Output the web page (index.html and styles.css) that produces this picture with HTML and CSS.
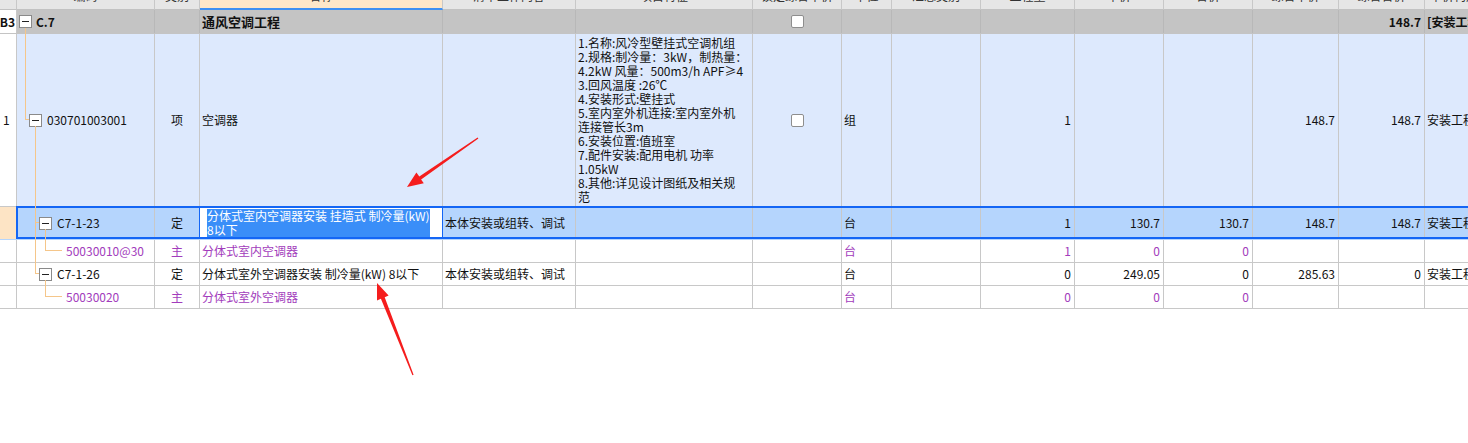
FILE: index.html
```html
<!DOCTYPE html>
<html lang="zh-CN">
<head>
<meta charset="utf-8">
<title>分部分项</title>
<link rel="stylesheet" href="styles.css">
</head>
<body>
<div class="page">
  <div class="grid">
    <div class="row head">
      <div class="c"></div>
      <div class="c">编码</div>
      <div class="c">类别</div>
      <div class="c name-h">名称</div>
      <div class="c">清单工作内容</div>
      <div class="c">项目特征</div>
      <div class="c">锁定综合单价</div>
      <div class="c">单位</div>
      <div class="c">汇总类别</div>
      <div class="c">工程量</div>
      <div class="c">单价</div>
      <div class="c">合价</div>
      <div class="c">综合单价</div>
      <div class="c">综合合价</div>
      <div class="c lefty">单价构成文件</div>
    </div>

    <div class="row sect">
      <div class="c num bold rnum">B3</div>
      <div class="c code l0"><span class="tg"></span><span class="bold">C.7</span></div>
      <div class="c"></div>
      <div class="c txt bold big">通风空调工程</div>
      <div class="c"></div>
      <div class="c"></div>
      <div class="c mid"><span class="chk"></span></div>
      <div class="c"></div>
      <div class="c"></div>
      <div class="c"></div>
      <div class="c"></div>
      <div class="c"></div>
      <div class="c"></div>
      <div class="c r bold">148.7</div>
      <div class="c txt bold">[安装工程]</div>
    </div>

    <div class="row item">
      <div class="c num">1</div>
      <div class="c code l1"><span class="tg"></span><span>030701003001</span></div>
      <div class="c mid">项</div>
      <div class="c txt">空调器</div>
      <div class="c"></div>
      <div class="c txt desc">1.名称:风冷型壁挂式空调机组<br>2.规格:制冷量：3kW，制热量：<br>4.2kW 风量：500m3/h APF≥4<br>3.回风温度 :26℃<br>4.安装形式:壁挂式<br>5.室内室外机连接:室内室外机<br>连接管长3m<br>6.安装位置:值班室<br>7.配件安装:配用电机 功率<br>1.05kW<br>8.其他:详见设计图纸及相关规<br>范</div>
      <div class="c mid"><span class="chk"></span></div>
      <div class="c txt">组</div>
      <div class="c"></div>
      <div class="c r">1</div>
      <div class="c"></div>
      <div class="c"></div>
      <div class="c r">148.7</div>
      <div class="c r">148.7</div>
      <div class="c txt">安装工程</div>
    </div>

    <div class="row sel">
      <div class="c num peach"></div>
      <div class="c code l2"><span class="tg"></span><span>C7-1-23</span></div>
      <div class="c mid edge">定</div>
      <div class="c txt editor edge"><span class="hl">分体式室内空调器安装 挂墙式 制冷量(kW)<br>8以下</span></div>
      <div class="c txt">本体安装或组转、调试</div>
      <div class="c"></div>
      <div class="c"></div>
      <div class="c txt">台</div>
      <div class="c"></div>
      <div class="c r">1</div>
      <div class="c r">130.7</div>
      <div class="c r">130.7</div>
      <div class="c r">148.7</div>
      <div class="c r">148.7</div>
      <div class="c txt">安装工程</div>
    </div>

    <div class="row std mat">
      <div class="c num"></div>
      <div class="c code l3"><span>50030010@30</span></div>
      <div class="c mid">主</div>
      <div class="c txt">分体式室内空调器</div>
      <div class="c"></div>
      <div class="c"></div>
      <div class="c"></div>
      <div class="c txt">台</div>
      <div class="c"></div>
      <div class="c r">1</div>
      <div class="c r">0</div>
      <div class="c r">0</div>
      <div class="c"></div>
      <div class="c"></div>
      <div class="c"></div>
    </div>

    <div class="row std">
      <div class="c num"></div>
      <div class="c code l2"><span class="tg"></span><span>C7-1-26</span></div>
      <div class="c mid">定</div>
      <div class="c txt">分体式室外空调器安装 制冷量(kW) 8以下</div>
      <div class="c txt">本体安装或组转、调试</div>
      <div class="c"></div>
      <div class="c"></div>
      <div class="c txt">台</div>
      <div class="c"></div>
      <div class="c r">0</div>
      <div class="c r">249.05</div>
      <div class="c r">0</div>
      <div class="c r">285.63</div>
      <div class="c r">0</div>
      <div class="c txt">安装工程</div>
    </div>

    <div class="row std mat">
      <div class="c num"></div>
      <div class="c code l3"><span>50030020</span></div>
      <div class="c mid">主</div>
      <div class="c txt">分体式室外空调器</div>
      <div class="c"></div>
      <div class="c"></div>
      <div class="c"></div>
      <div class="c txt">台</div>
      <div class="c"></div>
      <div class="c r">0</div>
      <div class="c r">0</div>
      <div class="c r">0</div>
      <div class="c"></div>
      <div class="c"></div>
      <div class="c"></div>
    </div>
  </div>

  <svg class="tree" width="1468" height="443" viewBox="0 0 1468 443">
    <g stroke="#f5c68a" stroke-width="1" fill="none" shape-rendering="crispEdges">
      <path d="M25.5 28 V119.5 H29"/>
      <path d="M35.5 126 V273.5 H39"/>
      <path d="M35.5 222.5 H39"/>
      <path d="M45.5 229 V250.5 H62"/>
      <path d="M45.5 280 V296.5 H62"/>
    </g>
  </svg>

  <svg class="arrows" width="1468" height="443" viewBox="0 0 1468 443">
    <polygon fill="#f51d1d" points="477.6,137.4 419.3,176.4 416.4,172.6 407,187 423.8,183.2 421.1,179.4 478.4,138.6"/>
    <polygon fill="#f51d1d" points="412.4,375.2 380.9,298.8 377,300.4 377,283 388.6,295.6 384.7,297.2 413.6,374.8"/>
  </svg>
</div>
</body>
</html>
```

FILE: styles.css
```css
html, body {
  margin: 0;
  padding: 0;
  background: #ffffff;
}

.page {
  position: relative;
  width: 1468px;
  height: 443px;
  overflow: hidden;
  font-family: "Noto Sans CJK SC", "Noto Sans", sans-serif;
  font-size: 12px;
  color: #111111;
}

.grid {
  width: 1525px;
  margin-top: -14px;
}

.row {
  box-sizing: border-box;
  display: grid;
  grid-template-columns: 17px 138px 45px 243px 133px 177px 89px 50px 89px 94px 89px 89px 86px 86px 100px;
  border-bottom: 1px solid #c8c8c8;
  line-height: 14px;
}

.c {
  box-sizing: border-box;
  border-right: 1px solid #c8c8c8;
  display: flex;
  align-items: center;
  white-space: nowrap;
  overflow: hidden;
  padding: 0 2px;
  min-width: 0;
}

/* header */
.head {
  height: 24px;
  border-bottom: none;
}
.head .c {
  background: #e6e6e6;
  justify-content: center;
  color: #333333;
  border-bottom: 1px solid #c2c2c2;
  padding-bottom: 4px;
}
.head .c.name-h {
  background: #fee7c9;
  border-bottom: 2px solid #3f90f2;
  padding-bottom: 3px;
}
.head .c.lefty {
  justify-content: flex-start;
  padding-left: 5px;
}

/* section row */
.sect {
  height: 24px;
  background: #c4c4c4;
  border-bottom-color: #c4c4c4;
}
.sect .c {
  border-right-color: #b8b8b8;
}
.sect .c.num {
  background: #ffffff;
  border-right-color: #c8c8c8;
}
.bold {
  font-weight: 700;
}
.big {
  font-size: 13px;
}

/* item row */
.item {
  height: 173px;
  background: #dde9fd;
}
.item .c.num {
  background: #ffffff;
}

/* selected row */
.sel {
  position: relative;
  height: 33px;
  background: #b5d5fd;
  border-bottom-color: transparent;
}
.sel::after {
  content: "";
  position: absolute;
  left: 16px;
  right: 0;
  top: -1px;
  bottom: 0;
  border: 2px solid #1466f5;
  border-right: none;
  pointer-events: none;
}
.sel .c.num {
  background: #fde4c5;
}
.sel .c.edge {
  border-right-color: #1466f5;
}
.sel .c.editor {
  background: #ffffff;
  padding-left: 7px;
}
.hl {
  background: #3a8ef8;
  color: #ffffff;
  line-height: 14px;
}

/* standard rows */
.std {
  height: 23px;
  background: #ffffff;
}
.mat {
  color: #a23cbc;
}

/* cell variants */
.c.num {
  padding-left: 3px;
}
.c.rnum {
  justify-content: flex-end;
  padding-right: 1px;
  padding-left: 0;
}
.c.mid {
  justify-content: center;
}
.c.r {
  justify-content: flex-end;
  padding-right: 3px;
}
.c.txt {
  justify-content: flex-start;
}
.c.desc {
  white-space: nowrap;
  align-items: center;
  line-height: 14px;
}

/* tree column */
.c.code {
  padding: 0;
}
.c.code.l0 { padding-left: 2px; }
.c.code.l1 { padding-left: 12px; }
.c.code.l2 { padding-left: 22px; }
.c.code.l3 { padding-left: 49px; }

.tg {
  position: relative;
  box-sizing: border-box;
  width: 13px;
  height: 13px;
  flex: none;
  border: 1px solid #8a8a8a;
  background: #ffffff;
  margin-right: 5px;
}
.tg::before {
  content: "";
  position: absolute;
  left: 2px;
  right: 2px;
  top: 5px;
  height: 1px;
  background: #222222;
}
.l0 .tg {
  margin-right: 4px;
}

.chk {
  box-sizing: border-box;
  width: 13px;
  height: 13px;
  border: 1px solid #8e8e8e;
  border-radius: 2px;
  background: #ffffff;
}

/* overlays */
.tree, .arrows {
  position: absolute;
  left: 0;
  top: 0;
  pointer-events: none;
}
```
